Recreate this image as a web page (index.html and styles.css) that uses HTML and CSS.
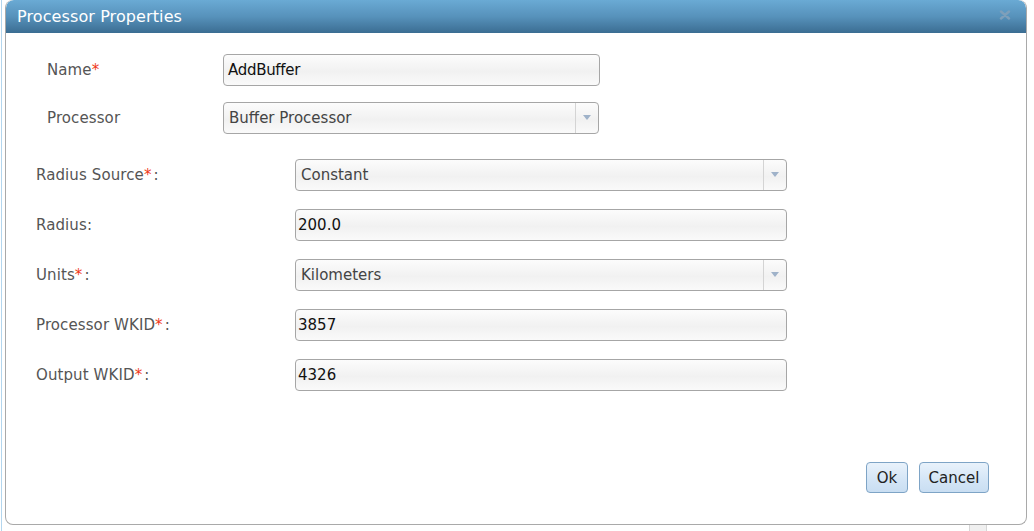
FILE: index.html
```html
<!DOCTYPE html>
<html>
<head>
<meta charset="utf-8">
<link rel="stylesheet" href="styles.css">
</head>
<body>
<div class="backdrop">
  <div class="dialog">
    <div class="dlg-header">
      <span class="dlg-title">Processor Properties</span>
      <svg class="dlg-close" width="12" height="10" viewBox="0 0 12 10"><path d="M2 1.5 L10 8.5 M10 1.5 L2 8.5" stroke="#7e9fba" stroke-width="2.4" stroke-linecap="round"/></svg>
    </div>
    <div class="dlg-body">
      <div class="form form-top">
        <label class="lbl">Name<span class="req">*</span></label>
        <div class="field"><span class="val first">AddBuffer</span></div>
        <label class="lbl">Processor</label>
        <div class="field select"><span class="val muted">Buffer Processor</span><span class="arrow"></span></div>
      </div>
      <div class="form form-props">
        <label class="lbl">Radius Source<span class="req">*</span><span class="colon">:</span></label>
        <div class="field select"><span class="val muted">Constant</span><span class="arrow"></span></div>
        <label class="lbl">Radius:</label>
        <div class="field"><span class="val tight">200.0</span></div>
        <label class="lbl">Units<span class="req">*</span><span class="colon">:</span></label>
        <div class="field select"><span class="val muted">Kilometers</span><span class="arrow"></span></div>
        <label class="lbl">Processor WKID<span class="req">*</span><span class="colon">:</span></label>
        <div class="field"><span class="val tight">3857</span></div>
        <label class="lbl">Output WKID<span class="req">*</span><span class="colon">:</span></label>
        <div class="field"><span class="val tight">4326</span></div>
      </div>
    </div>
    <div class="dlg-footer">
      <button class="btn btn-ok">Ok</button>
      <button class="btn btn-cancel">Cancel</button>
    </div>
  </div>
  <div class="under-scroll"></div>
</div>
</body>
</html>
```
FILE: styles.css
```css
html, body {
  margin: 0;
  padding: 0;
  background: #ffffff;
  overflow: hidden;
}
body {
  font-family: "DejaVu Sans", Verdana, sans-serif;
}
.backdrop {
  position: relative;
  height: 531px;
  margin-left: 1px;
  border-left: 1px solid #b3d6ee;
  padding-left: 3px;
  box-sizing: border-box;
}
.dialog {
  width: 1022px;
  height: 525px;
  box-sizing: border-box;
  border: 1px solid #a9a9a9;
  border-top: none;
  border-radius: 8px;
  background: #fff;
  display: flex;
  flex-direction: column;
  overflow: hidden;
  position: relative;
  z-index: 1;
}
.dlg-header {
  height: 33px;
  flex: none;
  background: linear-gradient(to bottom, #6aaad4 0%, #5792bb 50%, #3b6d92 100%);
  display: flex;
  align-items: center;
  justify-content: space-between;
  padding: 0 15px 0 11px;
  border-radius: 8px 8px 0 0;
}
.dlg-title {
  color: #ffffff;
  font-size: 16px;
  letter-spacing: 0.1px;
  padding-bottom: 1px;
}
.dlg-close {
  margin-top: -4px;
}
.dlg-body {
  flex: 1;
}
.form {
  display: grid;
  align-items: center;
}
.form-top {
  grid-template-columns: 176px 377px;
  row-gap: 16px;
  padding: 21px 0 0 41px;
}
.form-props {
  grid-template-columns: 259px 492px;
  row-gap: 18px;
  padding: 25px 0 0 30px;
}
.lbl {
  color: #555555;
  font-size: 15px;
  letter-spacing: 0.1px;
}
.req {
  color: #f03a1a;
}
.colon {
  margin-left: 2px;
}
.field {
  height: 32px;
  box-sizing: border-box;
  border: 1px solid #a6a6a6;
  border-radius: 4px;
  background: linear-gradient(to bottom, #fcfcfc 0%, #f1f1f1 55%, #fafafa 100%);
  display: flex;
  align-items: center;
}
.val {
  flex: 1;
  font-size: 15px;
  color: #111;
  padding-left: 2px;
}
.val.first {
  letter-spacing: -0.3px;
  padding-left: 4px;
}
.val.muted {
  color: #444;
  padding-left: 5px;
}
.select .arrow {
  width: 22px;
  height: 100%;
  border-left: 1px solid #d4d4d4;
  position: relative;
}
.select .arrow::after {
  content: "";
  position: absolute;
  left: 7px;
  top: 12px;
  border-left: 4px solid transparent;
  border-right: 4px solid transparent;
  border-top: 5px solid #9fb2c9;
}
.form-top .select {
  width: 376px;
}
.dlg-footer {
  flex: none;
  display: flex;
  justify-content: flex-end;
  gap: 11px;
  padding: 0 37px 31px 0;
}
.btn {
  height: 31px;
  box-sizing: border-box;
  border: 1px solid #7ea4c6;
  border-radius: 4px;
  background: linear-gradient(to bottom, #e9f2fb 0%, #d3e5f6 60%, #c9def2 100%);
  font-family: "DejaVu Sans", Verdana, sans-serif;
  font-size: 15px;
  color: #222;
  padding: 0;
}
.btn-ok {
  width: 42px;
}
.btn-cancel {
  width: 70px;
}
.under-scroll {
  position: absolute;
  left: 967px;
  top: 522px;
  width: 16px;
  height: 12px;
  background: #f0f0f0;
  border: 1px solid #d6d6d6;
}
```
